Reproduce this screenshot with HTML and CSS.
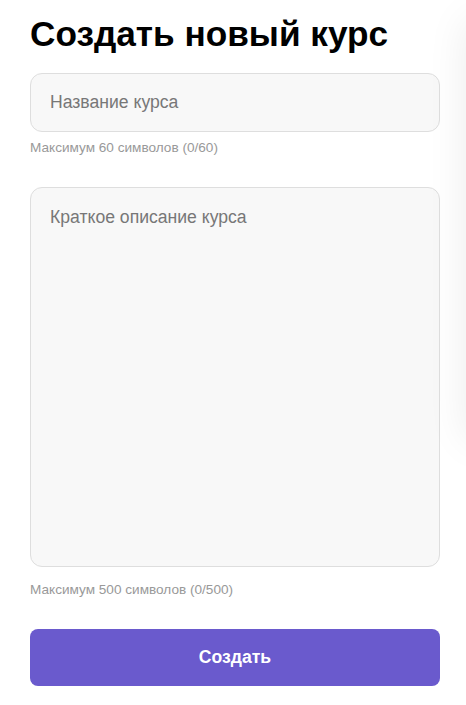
FILE: index.html
```html
<!DOCTYPE html>
<html lang="ru">
<head>
<meta charset="utf-8">
<title>Создать новый курс</title>
<link rel="stylesheet" href="styles.css">
</head>
<body>
<div class="side-shadow"></div>
<main class="page">
  <h1 class="title">Создать новый курс</h1>
  <form class="form">
    <div class="field field-short">
      <input class="input" type="text" placeholder="Название курса">
      <div class="hint">Максимум 60 символов (0/60)</div>
    </div>
    <div class="field field-long">
      <textarea class="textarea" placeholder="Краткое описание курса"></textarea>
      <div class="hint">Максимум 500 символов (0/500)</div>
    </div>
    <button class="submit" type="button">Создать</button>
  </form>
</main>
</body>
</html>
```

FILE: styles.css
```css
* { box-sizing: border-box; }
html, body { margin: 0; background: #fff; }
body {
  font-family: "Liberation Sans", Arial, sans-serif;
  color: #000;
  overflow: hidden;
}
.page {
  padding: 14px 26px 0 30px;
}
.title {
  margin: 0 0 18.5px;
  font-size: 35.2px;
  font-weight: 700;
  line-height: normal;
}
.form {
  display: flex;
  flex-direction: column;
}
.field {
  display: flex;
  flex-direction: column;
  margin-bottom: 32px;
}
.field-short { gap: 8.5px; }
.field-long { gap: 14.5px; margin-bottom: 32px; }
.input, .textarea {
  width: 100%;
  font-family: "Liberation Sans", Arial, sans-serif;
  font-size: 17.6px;
  color: #333;
  background: #f8f8f8;
  border: 1px solid #dedede;
  border-radius: 12px;
  padding: 0 19px;
  outline: none;
}
.input { height: 59px; }
.textarea {
  height: 380px;
  padding: 19px 19px;
  resize: none;
  display: block;
}
.input::placeholder, .textarea::placeholder { color: #777; }
.hint {
  font-size: 13.6px;
  color: #999;
  line-height: normal;
}
.submit {
  height: 57px;
  width: 100%;
  border: none;
  border-radius: 8px;
  background: #6a5acd;
  color: #fff;
  font-family: "Liberation Sans", Arial, sans-serif;
  font-size: 17.6px;
  font-weight: 700;
}
.side-shadow {
  position: fixed;
  top: 20px;
  right: -60px;
  width: 60px;
  height: 420px;
  box-shadow: 0 0 40px rgba(0, 0, 0, 0.08);
  background: #fff;
}
```
